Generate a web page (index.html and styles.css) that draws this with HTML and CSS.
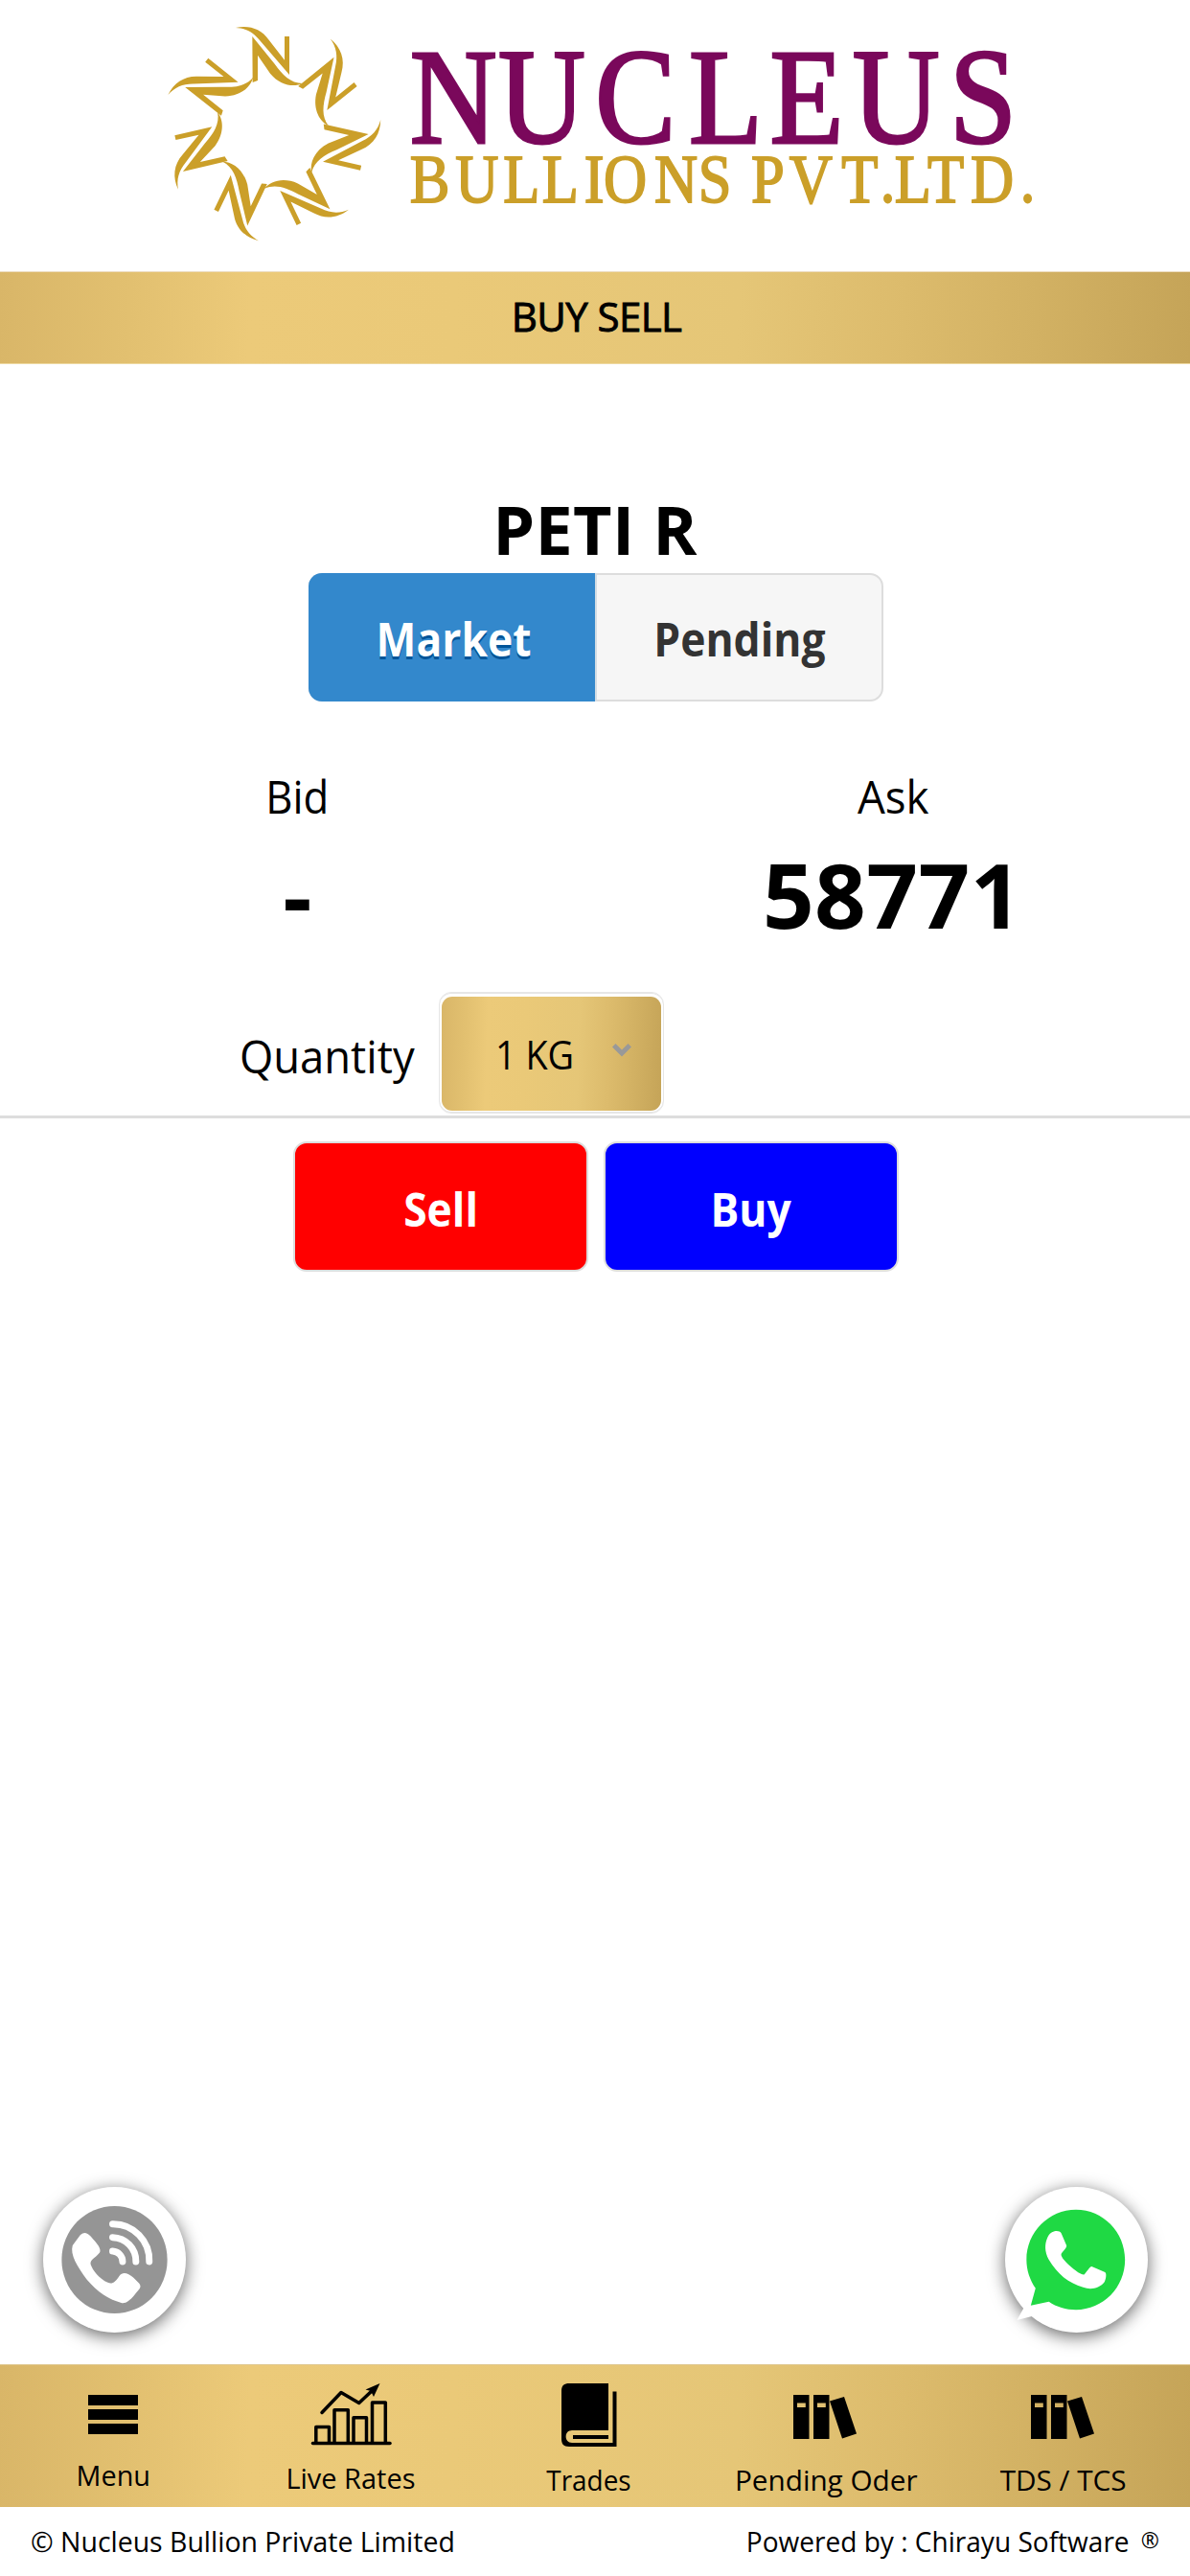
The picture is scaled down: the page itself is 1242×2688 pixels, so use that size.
FILE: index.html
```html
<!DOCTYPE html>
<html lang="en">
<head>
<meta charset="utf-8">
<title>Nucleus Bullion - Buy Sell</title>
<link rel="stylesheet" href="styles.css">
</head>
<body>
<header class="brand">
  <svg class="logo" viewBox="0 0 1242 283" role="img">
    <defs>
      <g id="ray">
        <path d="M310 84 L380 170 C405 205 430 230 467 231 C440 244 398 238 366 200 L327 143 V222 L311 228 Z"/>
        <path d="M258 57 C300 48 337 60 362 95 L411 158 V84 H426 V204 L335 98 C315 72 290 58 258 57 Z"/>
      </g>
    </defs>
    <g class="logo-gold" transform="translate(160 10) scale(.33333)">
      <use href="#ray"/>
      <use href="#ray" transform="rotate(51.43 370 382)"/>
      <use href="#ray" transform="rotate(102.86 370 382)"/>
      <use href="#ray" transform="rotate(154.29 370 382)"/>
      <use href="#ray" transform="rotate(205.71 370 382)"/>
      <use href="#ray" transform="rotate(257.14 370 382)"/>
      <use href="#ray" transform="rotate(308.57 370 382)"/>
    </g>
    <g transform="scale(.88 1)">
      <text class="logo-name" y="149" x="486 591 706 817 913 1011 1126">NUCLEUS</text>
      <text class="logo-sub" y="211" x="486 540 597 643 693 716 776 828 880 891 936 998 1044 1061 1100 1151 1210">BULLIONS PVT.LTD.</text>
    </g>
  </svg>
</header>

<div class="title-bar gold">BUY SELL</div>

<main class="trade">
  <h1 class="symbol"><span>PETI R</span></h1>
  <div class="tabs">
    <div class="tab tab-active"><span>Market</span></div>
    <div class="tab"><span>Pending</span></div>
  </div>
  <div class="prices">
    <div class="price"><span class="price-label bid-label">Bid</span><span class="price-value">-</span></div>
    <div class="price"><span class="price-label">Ask</span><span class="price-value">58771</span></div>
  </div>
  <div class="quantity">
    <div class="quantity-label"><span>Quantity</span></div>
    <div class="select"><div class="select-face gold">
      <span>1 KG</span>
      <svg class="chevron" viewBox="0 0 22 14"><path d="M1 3.5 L4.5 0 L11 6.5 L17.5 0 L21 3.5 L11 13.5 Z"/></svg>
    </div></div>
  </div>
  <div class="actions">
    <div class="btn btn-sell"><span>Sell</span></div>
    <div class="btn btn-buy"><span>Buy</span></div>
  </div>
</main>

<div class="contact">
  <div class="round">
    <svg viewBox="0 0 150 152">
      <ellipse cx="75" cy="76" rx="55.5" ry="56.5" fill="#959595"/>
      <path fill="#fff" d="M31 61 C28 71 36 83 46 97 C57 110 69 118 83 121.500 C87 122 91 119 96 113 C101 107 104 105 101 101 L95 95 C89 90 84 88 80 93 C76 99 73 102 68 100 C59 96 52 87 50 81 C49 76 54 75 59 69 C61 67 60 63 55 57 C48 49 45 45 39 50 Z"/>
      <g fill="none" stroke="#fff" stroke-width="7" stroke-linecap="round"><path d="M73 38.500 A38 38 0 0 1 111.500 78"/><path d="M73 52.500 A25 25 0 0 1 97.500 78"/><path d="M73 67 A11 11 0 0 1 83.500 78"/></g>
    </svg>
  </div>
  <div class="round">
    <svg viewBox="0 0 150 152">
      <path fill="#fff" d="M16 107 L21 124 L12.500 139.500 L38 133 Z"/>
      <path fill="#1fd944" d="M32 106 C26 97 22.500 87 22.500 76 C22.500 47 46 23.500 74.500 23.500 C103 23.500 126 47 126 76 C126 105 103 128.500 74.500 128.500 C64 128.500 54 125.500 46 120 L27 124 Z"/>
      <path fill="#fff" d="M52 46 C55 45.500 58 46 59 48 L64.500 61 C65.500 63 60 68 59 70 C58 73 65 80 70 84 C75 88 80 92 83 91.500 C85 90 89 83 91 83 L105 89 C107 90 106 97 104 100 C99 106 90 108 82 105 C66 100 55 91 46 76 C41 67 42 59 44 54 C46 49 48 47 52 46 Z"/>
    </svg>
  </div>
</div>

<nav class="nav gold">
  <div class="nav-items">
    <div class="nav-item nav-menu">
      <svg viewBox="0 0 80 68"><path d="M14 14h52v11H14zM14 29h52v11H14zM14 44h52v11H14z"/></svg><span>Menu</span>
    </div>
    <div class="nav-item nav-rates">
      <svg viewBox="0 0 80 68"><g fill="none" stroke="#000" stroke-width="3.500" stroke-linejoin="round"><path d="M.5 64.500H81" stroke-linecap="round"/><path d="M3.800 64V47.500H17.500V64M23 64V29.800H37.300V64M43 64V37.700H56.500V64M62.500 64V22H76.300V64"/><path d="M10 32.500L30 11.500L48.700 22.500L63 9" stroke-linecap="round"/></g><path d="M70.500 2L55.500 8.500L61 10L64 16Z"/></svg><span>Live Rates</span>
    </div>
    <div class="nav-item nav-trades">
      <svg viewBox="0 0 80 68"><path fill-rule="evenodd" d="M20 2H61V51H23C14.500 51 14.500 64 23 64H65.500V10.500H69.500V68H20C14 68 12 65 12 60V10C12 4 15 2 20 2ZM24 56H61V60H24Z"/></svg><span>Trades</span>
    </div>
    <div class="nav-item">
      <svg viewBox="0 0 80 68"><path fill-rule="evenodd" d="M6 14H22.500V60H6ZM10 22.500V27H18.800V22.500ZM27 14H43.500V60H27ZM31 22.500V27H39.800V22.500ZM44 20.500L59 16L72 54.500L57 59.500Z"/></svg><span>Pending Oder</span>
    </div>
    <div class="nav-item">
      <svg viewBox="0 0 80 68"><path fill-rule="evenodd" d="M6 14H22.500V60H6ZM10 22.500V27H18.800V22.500ZM27 14H43.500V60H27ZM31 22.500V27H39.800V22.500ZM44 20.500L59 16L72 54.500L57 59.500Z"/></svg><span>TDS / TCS</span>
    </div>
  </div>
</nav>
<footer class="footer">
  <span class="owner">© Nucleus Bullion Private Limited</span>
  <span class="powered"><span class="credit">Powered by : Chirayu Software</span> <small>®</small></span>
</footer>
</body>
</html>
```
FILE: styles.css
```css
* { box-sizing: border-box; }
body {
  margin: 0;
  width: 1242px;
  height: 2688px;
  display: flex;
  flex-direction: column;
  background: #fff;
  color: #000;
  font-family: "Open Sans", "Noto Sans", sans-serif;
  overflow: hidden;
}
svg { display: block; overflow: visible; }
.gold {
  background: linear-gradient(92deg, #d9b668 0%, #e2c070 11%, #ecca79 21%, #eac978 38%, #e5c677 62%, #dcbb6c 76%, #d2b163 87%, #c5a458 100%);
}
.brand { height: 283px; }
.logo { width: 1242px; height: 283px; }
.logo-gold { fill: #cb9f29; }
.logo-name, .logo-sub { font-family: "Liberation Serif", serif; }
.logo-name { font-size: 143px; fill: #7a085b; stroke: #7a085b; stroke-width: 3; }
.logo-sub { font-size: 71px; fill: #cb9f29; stroke: #cb9f29; stroke-width: 1.8; }
.title-bar {
  height: 97px;
  padding: 0 0 3px 3px;
  display: flex;
  align-items: center;
  justify-content: center;
  border-top: 1px solid #ecdcc0;
  border-bottom: 1px solid #eed9a0;
  font-size: 42px;
  line-height: 92px;
  letter-spacing: -0.6px;
  -webkit-text-stroke: 0.9px #000;
}
.trade { height: 1902px; display: flex; flex-direction: column; }
.symbol {
  margin: 126px 0 0;
  height: 92px;
  line-height: 92px;
  text-align: center;
  font-size: 70px;
  font-weight: 700;
  letter-spacing: 0.4px;
}
.tabs {
  display: flex;
  width: 600px;
  height: 134px;
  margin-left: 322px;
  border: 2px solid #ddd;
  border-radius: 14px;
  background: #f6f6f6;
}
.tab {
  flex: 1;
  text-align: center;
  line-height: 133px;
  font-size: 48px;
  font-weight: 700;
  color: #333;
}
.tab span, .btn span { display: inline-block; transform: scaleX(.925); }
.tab-active {
  flex: 0 0 301px;
  margin: -2px 0 -2px -2px;
  padding-left: 4px;
  line-height: 137px;
  border-radius: 14px 0 0 14px;
  background: #3388cc;
  border-right: 2px solid #d4dde4;
  color: #fff;
  text-shadow: 0 3px 0 #059;
}
.prices { display: flex; height: 303px; padding-top: 64px; }
.price { width: 621px; display: flex; flex-direction: column; align-items: center; }
.price-label { height: 70px; line-height: 69px; font-size: 48px; transform: translateX(1px) scaleX(.95); }
.bid-label { transform: scaleX(.91); }
.price-value { height: 128px; line-height: 134px; font-size: 94px; font-weight: 700; letter-spacing: 0.5px; }
.quantity {
  display: flex;
  height: 132px;
  padding-left: 250px;
  border-bottom: 3px solid #ddd;
}
.quantity-label { width: 208px; line-height: 134px; font-size: 48px; }
.quantity-label span { display: inline-block; transform: scaleX(.945); transform-origin: left; }
.select {
  width: 235px;
  height: 127px;
  padding: 4px 2px 2px;
  border: 1px solid #e6e6e6;
  border-radius: 13px;
  box-shadow: inset 0 1px #e6e6e6, inset 0 -1px #e6e6e6;
}
.select-face {
  height: 119px;
  display: flex;
  align-items: center;
  padding-left: 56px;
  border-radius: 11px;
  font-size: 42px;
}
.select-face span { width: 121px; line-height: 119px; white-space: nowrap; transform: scaleX(.9); transform-origin: left; }
.chevron { width: 22px; height: 14px; fill: #999; margin-top: -7px; }
.actions { display: flex; gap: 16px; padding: 24px 0 0 306px; }
.btn {
  width: 308px;
  height: 136px;
  border: 2px solid #ddd;
  border-radius: 14px;
  line-height: 138px;
  text-align: center;
  color: #fff;
  font-size: 48px;
  font-weight: 700;
}
.btn-sell { background: #f00; }
.btn-buy { background: #00f; }
.contact {
  height: 185px;
  display: flex;
  justify-content: space-between;
  padding: 0 44px 0 45px;
}
.round {
  width: 149px;
  height: 152px;
  border-radius: 50%;
  background: #fff;
  box-shadow: 0 4px 18px rgba(0, 0, 0, .6);
}
.round svg { width: 149px; height: 152px; }
.nav { height: 149px; border-top: 1px solid #dfc88f; }
.nav-items { display: grid; grid-template-columns: repeat(5, 248px); margin-left: -6px; }
.nav-item {
  display: flex;
  flex-direction: column;
  align-items: center;
  padding-top: 17px;
  font-size: 30px;
}
.nav-item svg { width: 80px; height: 68px; }
.nav-item span { line-height: 44px; margin-top: 13px; white-space: nowrap; transform: scaleX(.99); }
.nav-menu span { margin-top: 8px; transform: scaleX(.96); }
.nav-rates span { margin-top: 11px; transform: scaleX(.965); }
.nav-trades span { transform: scaleX(.93); }
.footer {
  height: 72px;
  display: flex;
  justify-content: space-between;
  padding: 0 32px;
  font-size: 30px;
  line-height: 71px;
  white-space: nowrap;
}
.owner { transform: scaleX(.948); transform-origin: left; }
.credit { display: inline-block; transform: scaleX(.935); transform-origin: right; }
.footer small { font-size: 23px; vertical-align: 4px; line-height: 1; margin-left: 4px; }
```
